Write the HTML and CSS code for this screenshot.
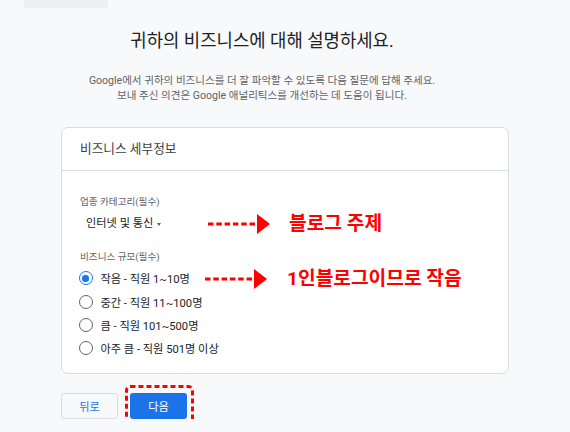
FILE: index.html
```html
<!DOCTYPE html>
<html lang="ko">
<head>
<meta charset="utf-8">
<title>비즈니스 정보</title>
<link rel="stylesheet" href="styles.css">
</head>
<body>
<div class="topbar"></div>
<header class="intro">
  <h1 class="title">귀하의 비즈니스에 대해 설명하세요.</h1>
  <p class="subtitle">Google에서 귀하의 비즈니스를 더 잘 파악할 수 있도록 다음 질문에 답해 주세요.<br>보내 주신 의견은 Google 애널리틱스를 개선하는 데 도움이 됩니다.</p>
</header>

<section class="card">
  <div class="card-head">비즈니스 세부정보</div>
  <div class="card-body">
    <div class="label">업종 카테고리(필수)</div>
    <div class="select">인터넷 및 통신 <span class="caret"></span></div>

    <div class="label label-size">비즈니스 규모(필수)</div>
    <div class="radios">
      <div class="radio-row"><span class="radio checked"></span><span>작음 - 직원 1~10명</span></div>
      <div class="radio-row"><span class="radio"></span><span>중간 - 직원 11~100명</span></div>
      <div class="radio-row"><span class="radio"></span><span>큼 - 직원 101~500명</span></div>
      <div class="radio-row"><span class="radio"></span><span>아주 큼 - 직원 501명 이상</span></div>
    </div>
  </div>

  <div class="note note-1">
    <svg class="arrow" width="62" height="20" viewBox="0 0 62 20"><line x1="0" y1="10" x2="49" y2="10" stroke="#ff0000" stroke-width="3" stroke-dasharray="5.5 2.8"/><polygon points="49,0 62,10 49,20" fill="#ff0000"/></svg>
    <span class="note-text">블로그 주제</span>
  </div>
  <div class="note note-2">
    <svg class="arrow" width="62" height="20" viewBox="0 0 62 20"><line x1="0" y1="10" x2="49" y2="10" stroke="#ff0000" stroke-width="3" stroke-dasharray="5.5 2.8"/><polygon points="49,0 62,10 49,20" fill="#ff0000"/></svg>
    <span class="note-text">1인블로그이므로 작음</span>
  </div>
</section>

<div class="actions">
  <button class="btn btn-back">뒤로</button>
  <span class="next-wrap">
    <button class="btn btn-next">다음</button>
    <svg class="highlight" width="69" height="41" viewBox="0 0 69 41"><rect x="1.5" y="1.5" width="66" height="38" rx="4" fill="none" stroke="#ff0000" stroke-width="3" stroke-dasharray="5 3"/></svg>
  </span>
</div>
</body>
</html>
```

FILE: styles.css
```css
* { box-sizing: border-box; }

body {
  margin: 0;
  background: #f8f9fa;
  font-family: Roboto, "Noto Sans CJK KR", sans-serif;
  color: #202124;
}

.topbar {
  width: 84px;
  height: 8px;
  margin-left: 24px;
  background: #eeeff1;
}

.intro {
  width: 524px;
  text-align: center;
  padding-top: 21px;
}

.title {
  margin: 0;
  font-size: 17.8px;
  line-height: 24px;
  font-weight: 400;
  color: #202124;
}

.subtitle {
  margin: 20px 0 0;
  font-size: 10.55px;
  line-height: 15px;
  color: #5f6368;
}

.card {
  position: relative;
  width: 448px;
  margin: 24px 0 0 61px;
  background: #fff;
  border: 1px solid #dadce0;
  border-radius: 7px;
}

.card-head {
  height: 43px;
  padding-left: 18px;
  line-height: 41px;
  font-size: 12.7px;
  color: #3c4043;
  border-bottom: 1px solid #dadce0;
}

.card-body {
  padding: 23.5px 18px 13px;
}

.label {
  font-size: 9.6px;
  line-height: 14px;
  color: #5f6368;
}

.select {
  display: flex;
  align-items: center;
  gap: 4px;
  margin-top: 6.5px;
  padding-left: 6px;
  font-size: 11.2px;
  line-height: 18px;
  color: #202124;
}

.caret {
  width: 0;
  height: 0;
  border-left: 2.5px solid transparent;
  border-right: 2.5px solid transparent;
  border-top: 3px solid #5f6368;
}

.label-size {
  margin-top: 16.5px;
}

.radios {
  margin-top: 3.2px;
}

.radio-row {
  display: flex;
  align-items: center;
  height: 23.33px;
  font-size: 11.2px;
  color: #202124;
}

.radio {
  width: 14px;
  height: 14px;
  margin: 0 8px 0 -1.5px;
  border: 1.5px solid #5f6368;
  border-radius: 50%;
  display: flex;
  align-items: center;
  justify-content: center;
}

.radio.checked {
  border-color: #1a73e8;
}

.radio.checked::after {
  content: "";
  width: 6.5px;
  height: 6.5px;
  border-radius: 50%;
  background: #1a73e8;
}

.note {
  position: absolute;
  display: flex;
  align-items: center;
  height: 20px;
}

.note-1 { left: 146px; top: 86px; gap: 19px; }
.note-2 { left: 143px; top: 141px; gap: 20px; }

.arrow { display: block; }

.note-text {
  font-size: 19.2px;
  line-height: 20px;
  font-weight: 700;
  color: #ff0000;
  white-space: nowrap;
}

.actions {
  display: flex;
  gap: 12px;
  margin: 19px 0 0 61px;
}

.btn {
  height: 26px;
  width: 57px;
  border-radius: 3px;
  font-family: inherit;
  font-size: 11.2px;
  padding: 0;
  cursor: pointer;
}

.btn-back {
  background: #f8f9fa;
  border: 1px solid #dadce0;
  color: #1a73e8;
}

.next-wrap {
  position: relative;
  display: block;
}

.btn-next {
  display: block;
  background: #1a73e8;
  border: none;
  color: #fff;
}

.highlight {
  position: absolute;
  left: -5px;
  top: -8px;
  pointer-events: none;
}
```
